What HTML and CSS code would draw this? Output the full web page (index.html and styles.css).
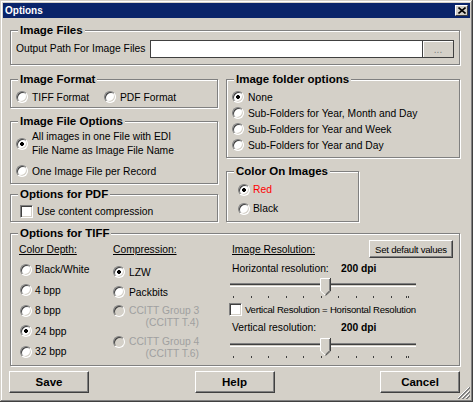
FILE: index.html
```html
<!DOCTYPE html>
<html lang="en">
  <head>
    <meta charset="UTF-8" />
    <meta name="viewport" content="width=device-width, initial-scale=1.0" />
    <title>Options</title>
    <link rel="stylesheet" href="styles.css">
  </head>
  <body>
    <div class="window">
      <div class="titlebar">
        <span class="caption">Options</span>
        <span class="close">
          <svg width="8" height="7" viewBox="0 0 8 7"><path d="M0.5 0.5L7.5 6.5M7.5 0.5L0.5 6.5" stroke="#000" stroke-width="1.6" fill="none" /></svg>
        </span>
      </div>
      <div class="client">
        <div class="group files">
          <div class="legend">Image Files</div>
          <div class="files-body">
            <span class="path-label">Output Path For Image Files</span>
            <div class="path-box">
              <input type="text" class="path" />
              <button class="browse">...</button>
            </div>
          </div>
        </div>

        <div class="columns">
          <div class="col">
            <div class="group">
              <div class="legend">Image Format</div>
              <div class="format-body">
                <label class="opt tiff-opt"><input type="radio" class="radio" name="fmt" />TIFF Format</label>
                <label class="opt"><input type="radio" class="radio" name="fmt" />PDF Format</label>
              </div>
            </div>
            <div class="group fileopts">
              <div class="legend">Image File Options</div>
              <div class="fileopts-body">
                <label class="opt multi"><input type="radio" class="radio" name="fileopt" checked />All images in one File with EDI<br />File Name as Image File Name</label>
                <label class="opt single-file"><input type="radio" class="radio" name="fileopt" />One Image File per Record</label>
              </div>
            </div>
            <div class="group pdf">
              <div class="legend">Options for PDF</div>
              <div class="pdf-body">
                <label class="opt"><input type="checkbox" class="check" />Use content compression</label>
              </div>
            </div>
          </div>

          <div class="col">
            <div class="group">
              <div class="legend">Image folder options</div>
              <div class="folders-body">
                <label class="opt"><input type="radio" class="radio" name="folder" checked />None</label>
                <label class="opt"><input type="radio" class="radio" name="folder" />Sub-Folders for Year, Month and Day</label>
                <label class="opt"><input type="radio" class="radio" name="folder" />Sub-Folders for Year and Week</label>
                <label class="opt"><input type="radio" class="radio" name="folder" />Sub-Folders for Year and Day</label>
              </div>
            </div>
            <div class="group color">
              <div class="legend">Color On Images</div>
              <div class="color-body">
                <label class="opt red"><input type="radio" class="radio" name="color" checked />Red</label>
                <label class="opt"><input type="radio" class="radio" name="color" />Black</label>
              </div>
            </div>
          </div>
        </div>

        <div class="group tiff">
          <div class="legend">Options for TIFF</div>
          <div class="tiff-body">
            <div class="depth">
              <div class="col-head"><u>Color Depth:</u></div>
              <label class="opt"><input type="radio" class="radio" name="depth" />Black/White</label>
              <label class="opt"><input type="radio" class="radio" name="depth" />4 bpp</label>
              <label class="opt"><input type="radio" class="radio" name="depth" />8 bpp</label>
              <label class="opt"><input type="radio" class="radio" name="depth" checked />24 bpp</label>
              <label class="opt"><input type="radio" class="radio" name="depth" />32 bpp</label>
            </div>
            <div class="compression">
              <div class="col-head"><u>Compression:</u></div>
              <label class="opt"><input type="radio" class="radio" name="comp" checked />LZW</label>
              <label class="opt"><input type="radio" class="radio" name="comp" />Packbits</label>
              <label class="opt multi disabled g3"><input type="radio" class="radio" name="comp" disabled /><span class="ccitt">CCITT Group 3<br />(CCITT T.4)</span></label>
              <label class="opt multi disabled g4"><input type="radio" class="radio" name="comp" disabled /><span class="ccitt">CCITT Group 4<br />(CCITT T.6)</span></label>
            </div>
            <div class="resolution">
              <div class="col-head res-head">
                <u>Image Resolution:</u>
                <button class="btn small">Set default values</button>
              </div>
              <div class="res-row">
                <span class="res-label">Horizontal resolution:</span>
                <b>200 dpi</b>
              </div>
              <div class="slider">
                <div class="track"></div>
                <svg class="thumb" style="left: 90px" width="11" height="18" viewBox="0 0 11 18">
                  <path d="M0 0H11V13L5.5 18L0 13Z" fill="#d4d0c8" />
                  <path d="M0.5 13V0.5H10" stroke="#fff" fill="none" />
                  <path d="M0.5 13L5.5 17.5" stroke="#fff" fill="none" />
                  <path d="M9.5 1V12.6L5.5 16.3" stroke="#808080" fill="none" />
                  <path d="M10.5 0V13L5.5 17.6" stroke="#404040" fill="none" />
                </svg>
                <div class="ticks">
                  <i></i><i></i><i></i><i></i><i></i><i></i><i></i><i></i><i></i><i></i><i class="last"></i>
                </div>
              </div>
              <label class="opt same-res"><input type="checkbox" class="check" />Vertical Resolution = Horisontal Resolution</label>
              <div class="res-row second">
                <span class="res-label">Vertical resolution:</span>
                <b>200 dpi</b>
              </div>
              <div class="slider second">
                <div class="track"></div>
                <svg class="thumb" style="left: 90px" width="11" height="18" viewBox="0 0 11 18">
                  <path d="M0 0H11V13L5.5 18L0 13Z" fill="#d4d0c8" />
                  <path d="M0.5 13V0.5H10" stroke="#fff" fill="none" />
                  <path d="M0.5 13L5.5 17.5" stroke="#fff" fill="none" />
                  <path d="M9.5 1V12.6L5.5 16.3" stroke="#808080" fill="none" />
                  <path d="M10.5 0V13L5.5 17.6" stroke="#404040" fill="none" />
                </svg>
                <div class="ticks">
                  <i></i><i></i><i></i><i></i><i></i><i></i><i></i><i></i><i></i><i></i><i class="last"></i>
                </div>
              </div>
            </div>
          </div>
        </div>

        <div class="buttons">
          <button class="btn">Save</button>
          <button class="btn">Help</button>
          <button class="btn">Cancel</button>
        </div>
      </div>
      <svg class="grip" width="12" height="12" viewBox="0 0 12 12">
        <path d="M11 0L0 11M11 4L4 11M11 8L8 11" stroke="#fff" fill="none" />
        <path d="M12 0L0 12M12 1L1 12M12 4L4 12M12 5L5 12M12 8L8 12M12 9L9 12" stroke="#808080" fill="none" />
      </svg>
    </div>
  </body>
</html>
```

FILE: styles.css
```css
* {
  box-sizing: border-box;
}
body {
  margin: 0;
  font: 10.3px "Liberation Sans", Arial, sans-serif;
  color: #000;
}
.window {
  position: relative;
  width: 473px;
  height: 402px;
  padding: 3px;
  background: #d4d0c8;
  box-shadow: inset -1px -1px #404040, inset 1px 1px #d4d0c8,
    inset -2px -2px #808080, inset 2px 2px #fff;
}
.titlebar {
  height: 15px;
  padding: 0 2px;
  display: flex;
  align-items: center;
  justify-content: space-between;
  background: #0a246a;
  color: #fff;
  font-weight: bold;
  font-size: 10px;
}
.close {
  width: 13px;
  height: 11px;
  display: flex;
  align-items: center;
  justify-content: center;
  background: #d4d0c8;
  border: 1px solid;
  border-color: #fff #404040 #404040 #fff;
}
.client {
  padding: 0 10px 0 7px;
}

/* etched group box */
.group {
  border: 1px solid #808080;
  box-shadow: inset 1px 1px #fff, 1px 1px #fff;
  padding: 0 5px;
}
.legend {
  width: max-content;
  margin: -7px 0 0 2px;
  padding: 0 2px;
  background: #d4d0c8;
  font-weight: bold;
  font-size: 11.5px;
  line-height: 13px;
}
.opt {
  display: flex;
  align-items: center;
  height: 14px;
  white-space: nowrap;
}
.radio {
  appearance: none;
  flex: none;
  width: 12px;
  height: 12px;
  margin: 0 4px 0 0;
  border-radius: 50%;
  border: 1px solid;
  border-color: #808080 #fff #fff #808080;
  box-shadow: inset 1px 1px #404040, inset -1px -1px #d4d0c8;
  background: #fff;
}
.radio:checked {
  background: radial-gradient(circle, #000 1.6px, #fff 2.2px);
}
.radio:disabled {
  background: #d4d0c8;
}
.check {
  appearance: none;
  flex: none;
  width: 13px;
  height: 13px;
  margin: 0 4px 0 0;
  border: 1px solid;
  border-color: #808080 #fff #fff #808080;
  box-shadow: inset 1px 1px #404040, inset -1px -1px #d4d0c8;
  background: #fff;
}
.btn {
  width: 80px;
  height: 22px;
  padding: 0;
  font: bold 11.5px "Liberation Sans", Arial, sans-serif;
  color: #000;
  background: #d4d0c8;
  border: 1px solid;
  border-color: #fff #404040 #404040 #fff;
  box-shadow: inset -1px -1px #808080, inset 1px 1px #d4d0c8;
}
.btn.small {
  width: 84px;
  height: 18px;
  margin-right: 1px;
  font-weight: normal;
  font-size: 9.6px;
  letter-spacing: -0.25px;
}

/* image files */
.files {
  margin-top: 12px;
}
.files-body {
  height: 27px;
  padding-top: 3px;
  display: flex;
}
.path-label {
  line-height: 18px;
}
.path-box {
  width: 304px;
  height: 18px;
  margin-left: auto;
  display: flex;
  border: 1px solid #404040;
  background: #fff;
}
.path {
  flex: 1;
  min-width: 0;
  border: 0;
  padding: 0 2px;
  font: inherit;
  outline: none;
}
.browse {
  width: 31px;
  padding: 0;
  border: 0;
  border-left: 1px solid #404040;
  background: #d4d0c8;
  box-shadow: inset 1px 1px #fff;
  color: #808080;
  font: 10px "Liberation Sans", Arial, sans-serif;
  line-height: 18px;
}

.columns {
  margin-top: 14px;
  display: grid;
  grid-template-columns: 208px 1fr;
  column-gap: 8px;
  align-items: start;
}
.format-body {
  height: 21px;
  padding-top: 4px;
  display: flex;
}
.tiff-opt {
  width: 88px;
}
.fileopts {
  margin-top: 13px;
}
.fileopts-body {
  height: 55px;
  padding-top: 2px;
}
.opt.multi {
  height: auto;
  line-height: 14px;
}
.single-file {
  margin-top: 6px;
}
.pdf {
  margin-top: 10px;
}
.pdf-body {
  height: 20px;
  padding: 3px 0 0 4px;
}
.folders-body {
  height: 71px;
  padding-top: 3px;
}
.folders-body .opt {
  height: 16px;
}
.color {
  width: 133px;
  margin-top: 13px;
}
.color-body {
  height: 43px;
  padding: 2px 0 0 6px;
}
.color-body .opt {
  height: 19px;
}
.color-body .radio {
  margin-right: 3px;
}
.red {
  color: #f00;
}

/* tiff */
.tiff {
  margin-top: 11px;
}
.tiff-body {
  height: 125px;
  display: flex;
}
.col-head {
  height: 18px;
  display: flex;
  align-items: center;
}
.depth {
  width: 94px;
  margin-left: 3px;
}
.depth .col-head {
  margin-bottom: 1.5px;
}
.depth .opt {
  height: 20.5px;
}
.depth .radio {
  margin: 0 3px 0 1px;
}
.compression {
  width: 117px;
}
.compression .col-head {
  margin-bottom: 4px;
}
.compression .opt {
  height: 20px;
}
.compression .opt.multi {
  height: auto;
  align-items: flex-start;
  line-height: 12.5px;
}
.g3 {
  margin-top: 2.5px;
}
.g4 {
  margin-top: 6px;
}
.ccitt {
  width: 70px;
  text-align: right;
}
.disabled {
  color: #a0a0a0;
}
.resolution {
  flex: 1;
}
.res-head {
  justify-content: space-between;
  padding-left: 2px;
}
.res-row {
  height: 14px;
  margin-top: 3px;
  padding-left: 2px;
  display: flex;
  align-items: center;
}
.res-row.second {
  margin-top: 4px;
}
.res-label {
  width: 109px;
}
.slider {
  position: relative;
  width: 186px;
  height: 24px;
  padding-top: 8px;
}
.slider.second {
  margin-top: 1px;
}
.track {
  height: 4px;
  background: linear-gradient(#808080 0 1px, #404040 1px 2px, #d4d0c8 2px 3px, #fff 3px);
}
.thumb {
  position: absolute;
  top: 3px;
}
.ticks {
  width: 176px;
  margin: 9px 0 0 3px;
  display: flex;
  justify-content: space-between;
}
.ticks i {
  width: 1px;
  height: 2px;
  background: #404040;
}
.ticks i.last {
  box-shadow: -2px 0 #404040;
}
.same-res {
  margin: 3px 0 0 -1px;
  font-size: 9.6px;
  letter-spacing: -0.25px;
}
.same-res .check {
  margin-right: 3px;
}

.buttons {
  margin: 5px 0 0 -1px;
  display: flex;
  justify-content: space-between;
}
.grip {
  position: absolute;
  right: 3px;
  bottom: 3px;
}
```
